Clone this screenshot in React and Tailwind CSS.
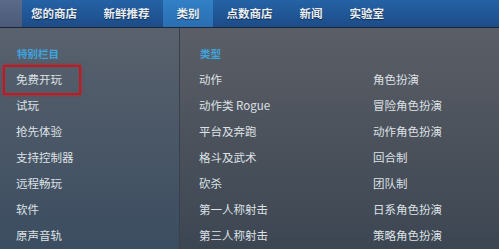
import React from "react";

const tabs = ["您的商店", "新鲜推荐", "类别", "点数商店", "新闻", "实验室"];

const special = ["免费开玩", "试玩", "抢先体验", "支持控制器", "远程畅玩", "软件", "原声音轨"];

const genresA = ["动作", "动作类 Rogue", "平台及奔跑", "格斗及武术", "砍杀", "第一人称射击", "第三人称射击"];
const genresB = ["角色扮演", "冒险角色扮演", "动作角色扮演", "回合制", "团队制", "日系角色扮演", "策略角色扮演"];

const font = { fontFamily: '"Noto Sans CJK SC", "Noto Sans", sans-serif' };

function Item({ children, boxed }) {
  return (
    <div className="relative flex h-[26px] items-center text-[11.5px] text-[#dde1e5]">
      {boxed ? (
        <span className="absolute left-[-13px] top-[-2px] h-[30px] w-[78px] border-2 border-[#c8171c] shadow-[0_0_3px_rgba(200,23,28,0.6)]" />
      ) : null}
      <span>{children}</span>
    </div>
  );
}

export default function App() {
  return (
    <div className="h-[249px] w-[499px] overflow-hidden bg-[#4b525c]" style={font}>
      {/* top nav */}
      <div className="flex h-[28px] border-b border-[#18263a] bg-gradient-to-b from-[#2562a6] to-[#1d4c88] shadow-[0_1px_2px_rgba(0,0,0,0.5)]">
        <div className="w-[22px] bg-gradient-to-b from-[#5a6a88] to-[#4a5a78]" />
        {tabs.map((t, i) => (
          <div
            key={t}
            className={`flex items-center text-[11.5px] font-bold text-[#e9eef5] ${i === 0 ? "pl-[9px] pr-[13px]" : "px-[13.5px]"} ${
              t === "类别" ? "bg-gradient-to-b from-[#3180c6] to-[#2a6eb2]" : ""
            }`}
            style={{ textShadow: "0 1px 1px rgba(0,0,0,0.5)" }}
          >
            {t}
          </div>
        ))}
      </div>

      {/* dropdown body */}
      <div className="flex h-[221px]">
        <div className="w-[180px] border-r border-[#3a4049] bg-gradient-to-b from-[#59616d] to-[#3b4d60] pl-[16px] pt-[13px]">
          <div className="flex h-[26px] items-center pl-px text-[10.5px] font-bold text-[#3fa3dc]">特别栏目</div>
          {special.map((s, i) => (
            <Item key={s} boxed={i === 0}>
              {s}
            </Item>
          ))}
        </div>
        <div className="flex-1 bg-gradient-to-b from-[#5b5e66] to-[#3c4652] pl-[19px] pt-[13px]">
          <div className="flex h-[26px] items-center pl-px text-[10.5px] font-bold text-[#3fa3dc]">类型</div>
          <div className="flex">
            <div className="w-[174px]">
              {genresA.map((g) => (
                <Item key={g}>{g}</Item>
              ))}
            </div>
            <div>
              {genresB.map((g) => (
                <Item key={g}>{g}</Item>
              ))}
            </div>
          </div>
        </div>
      </div>
    </div>
  );
}
